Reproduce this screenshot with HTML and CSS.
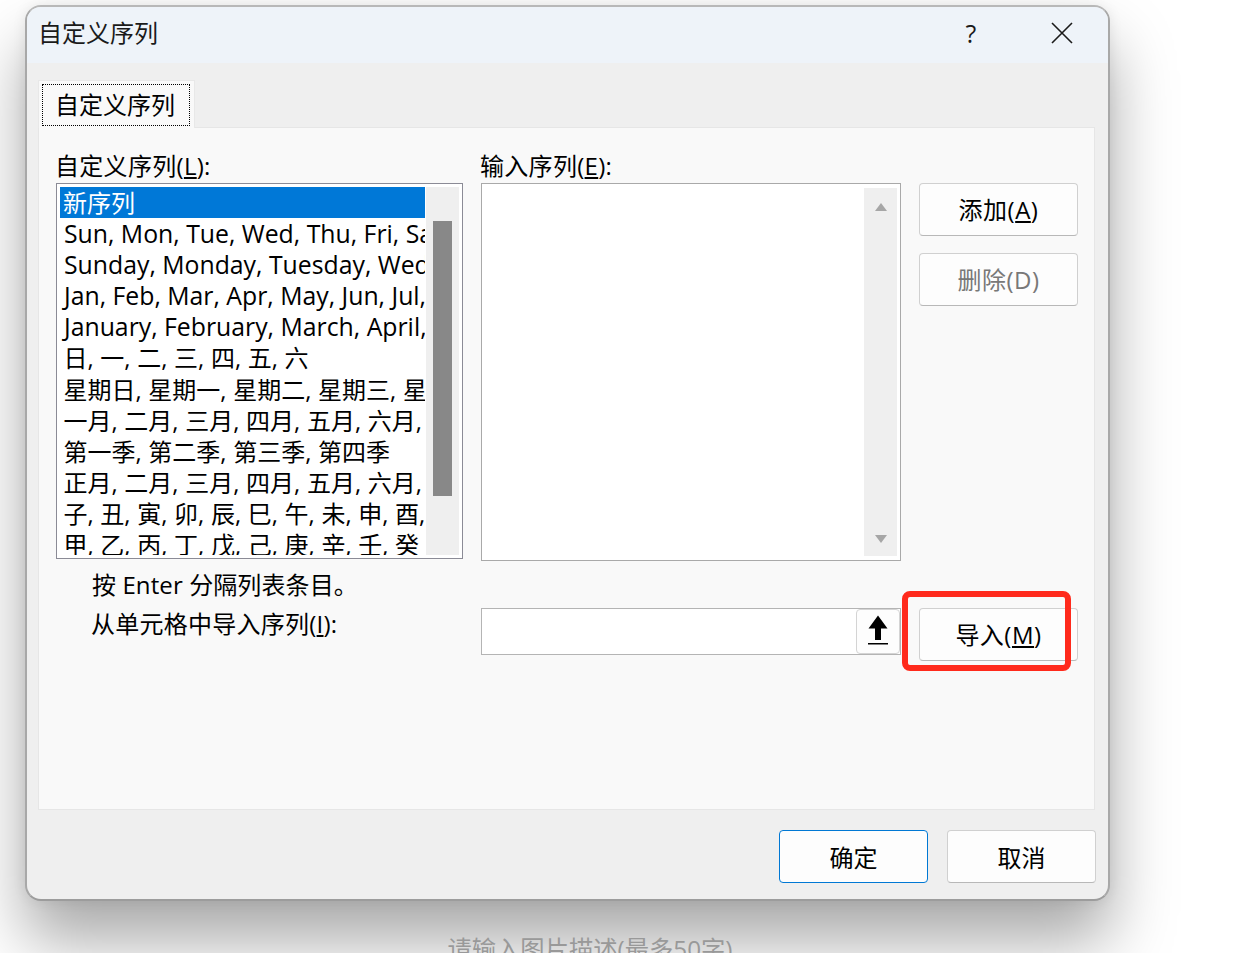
FILE: index.html
```html
<!DOCTYPE html>
<html lang="zh-CN">
<head>
<meta charset="utf-8">
<title>自定义序列</title>
<link rel="stylesheet" href="styles.css">
</head>
<body>
<div class="dialog">
  <header class="titlebar">
    <span class="title">自定义序列</span>
    <span class="help">?</span>
    <svg class="close" width="22" height="22" viewBox="0 0 22 22"><path d="M1 1L21 21M21 1L1 21" stroke="#1a1a1a" stroke-width="1.6" fill="none"/></svg>
  </header>
  <div class="tabs"><div class="tab"><span class="tab-focus">自定义序列</span></div></div>
  <main class="panel">
    <label class="lbl lbl-list">自定义序列(<u>L</u>):</label>
    <label class="lbl lbl-input">输入序列(<u>E</u>):</label>
    <div class="listbox">
      <ul class="items">
        <li class="sel">新序列</li>
        <li class="latin">Sun, Mon, Tue, Wed, Thu, Fri, Sat</li>
        <li class="latin">Sunday, Monday, Tuesday, Wednesday</li>
        <li class="latin">Jan, Feb, Mar, Apr, May, Jun, Jul, Aug</li>
        <li class="latin">January, February, March, April, May</li>
        <li>日, 一, 二, 三, 四, 五, 六</li>
        <li>星期日, 星期一, 星期二, 星期三, 星期四</li>
        <li>一月, 二月, 三月, 四月, 五月, 六月, 七月</li>
        <li>第一季, 第二季, 第三季, 第四季</li>
        <li>正月, 二月, 三月, 四月, 五月, 六月, 七月</li>
        <li>子, 丑, 寅, 卯, 辰, 巳, 午, 未, 申, 酉, 戌</li>
        <li>甲, 乙, 丙, 丁, 戊, 己, 庚, 辛, 壬, 癸</li>
      </ul>
      <div class="list-scroll"><div class="thumb"></div></div>
    </div>
    <div class="textarea">
      <div class="ta-scroll">
        <svg width="14" height="10" viewBox="0 0 14 10"><path d="M7 1L13 9H1Z" fill="#a6a6a6"/></svg>
        <svg width="14" height="10" viewBox="0 0 14 10"><path d="M1 1H13L7 9Z" fill="#a6a6a6"/></svg>
      </div>
    </div>
    <div class="side">
      <button class="btn">添加(<u>A</u>)</button>
      <button class="btn off">删除(D)</button>
    </div>
    <p class="hint">按 Enter 分隔列表条目。</p>
    <label class="lbl-range">从单元格中导入序列(<u>I</u>):</label>
    <div class="range">
      <button class="picker">
        <svg class="arrow" width="24" height="30" viewBox="0 0 24 30"><path d="M12 .5L21.5 13.5H15V25H9V13.5H2.5Z" fill="#000"/><rect x="2" y="28" width="20" height="1.5" fill="#000"/></svg>
      </button>
    </div>
    <div class="import">
      <button class="btn">导入(<u>M</u>)</button>
      <div class="mark"></div>
    </div>
  </main>
  <footer class="actions">
    <button class="btn wide primary">确定</button>
    <button class="btn wide">取消</button>
  </footer>
</div>
<p class="caption">请输入图片描述(最多50字)</p>
</body>
</html>
```
FILE: styles.css
```css
* { box-sizing: border-box; }
html, body { height: 953px; overflow: hidden; }
body {
  margin: 0;
  padding: 5px 0 0 25px;
  background: #fff;
  font-family: "Open Sans", "Noto Sans CJK SC", sans-serif;
  font-size: 24px;
  color: #000;
}
.dialog {
  width: 1085px;
  height: 896px;
  border: 2px solid #a8a8a8;
  border-top-color: #b8b8b8;
  border-bottom-color: #9c9c9c;
  border-radius: 16px;
  background: #efefef;
  box-shadow: 0 40px 64px rgba(0,0,0,.34), 0 0 14px rgba(0,0,0,.08);
  overflow: hidden;
}
.titlebar {
  height: 56px;
  background: #eef3f9;
  display: flex;
  align-items: center;
  padding: 0 36px 0 11px;
  color: #1a1a1a;
}
.title { flex: 1; line-height: 48px; height: 52px; }
.help { width: 20px; text-align: center; margin-right: 70px; line-height: 48px; height: 52px; font-size: 25px; }
.close { display: block; margin: -5px -1px 0 0; }
.tabs { margin: 17px 0 0 11px; height: 47px; display: flex; }
.tab {
  width: 157px;
  height: 48px;
  background: #f9f9f9;
  border: 1px solid #e8e8e8;
  border-bottom: 0;
  padding: 3px 4px 0 3px;
  position: relative;
  z-index: 1;
}
.tab-focus {
  display: block;
  height: 42px;
  border: 1px dotted #000;
  line-height: 40px;
  padding-left: 12px;
}
.panel {
  margin: 0 13px 0 11px;
  height: 683px;
  background: #f9f9f9;
  border: 1px solid #e6e6e6;
  padding: 27px 0 0 17px;
  display: grid;
  grid-template-columns: 407px 420px 159px;
  grid-template-rows: 28px 378px 47px auto;
  column-gap: 18px;
  align-content: start;
  align-items: start;
}
.lbl { line-height: 22px; margin-left: -1px; letter-spacing: .3px; }
.lbl-list { grid-area: 1 / 1; }
.lbl-input { grid-area: 1 / 2; }
.listbox {
  grid-area: 2 / 1;
  height: 376px;
  border: 1px solid #8b8b96;
  background: #fff;
  padding: 3px;
  display: flex;
  overflow: hidden;
}
.items {
  list-style: none;
  margin: 0;
  padding: 0;
  width: 365px;
  flex: none;
  height: 368px;
  overflow: hidden;
}
.items li {
  line-height: 31.1px;
  height: 31.1px;
  white-space: nowrap;
  overflow: hidden;
  padding-left: 3.5px;
  word-spacing: .4px;
}
.items .latin { font-size: 24.8px; word-spacing: 0; padding-left: 4px; }
.items .sel { background: #0078d7; color: #fff; padding-left: 3px; }
.list-scroll {
  margin-left: 1px;
  width: 33px;
  height: 368px;
  background: #efefef;
  padding: 34px 7px 0;
}
.thumb { height: 275px; background: #888; }
.textarea {
  grid-area: 2 / 2;
  height: 378px;
  border: 1px solid #a9a9a9;
  background: #fff;
  padding: 4px 3px;
  display: flex;
  justify-content: flex-end;
}
.ta-scroll {
  width: 33px;
  background: #efefef;
  display: flex;
  flex-direction: column;
  justify-content: space-between;
  align-items: center;
  padding: 14px 0 12px;
}
.ta-scroll svg { display: block; }
.side { grid-area: 2 / 3; display: flex; flex-direction: column; gap: 17px; }
.btn {
  font: inherit;
  letter-spacing: .5px;
  color: #000;
  width: 159px;
  height: 53px;
  background: #fdfdfd;
  border: 1px solid #d0d0d0;
  border-bottom-color: #b8b8b8;
  border-radius: 4px;
  padding: 0 0 2px;
}
.btn.off { color: #787878; }
.wide { width: 149px; letter-spacing: 0; padding: 0; }
.primary { border-color: #0078d4; }
.hint { grid-area: 3 / 1; margin: 0; padding: 8px 0 0 36px; line-height: 32px; letter-spacing: .1px; }
.lbl-range { grid-area: 4 / 1; padding-left: 35px; line-height: 32px; letter-spacing: .25px; }
.range {
  grid-area: 4 / 2;
  height: 47px;
  background: #fff;
  border: 1px solid #b4b4b4;
  display: flex;
  justify-content: flex-end;
}
.picker {
  width: 44px;
  height: 45px;
  padding: 0;
  background: #fdfdfd;
  border: 1px solid #d4d4d4;
  border-radius: 4px;
  display: flex;
  align-items: center;
  justify-content: center;
}
.arrow { display: block; margin-top: -3px; }
.import { grid-area: 4 / 3; position: relative; height: 53px; }
.mark {
  position: absolute;
  left: -17px;
  top: -17px;
  width: 169px;
  height: 80px;
  border: 6px solid #ff2a1c;
  border-radius: 8px;
}
.actions {
  display: flex;
  justify-content: flex-end;
  gap: 19px;
  padding: 20px 12px 0 0;
}
.caption {
  margin: 33px 0 0;
  width: 1130px;
  text-align: center;
  font-size: 24.3px;
  line-height: 30px;
  color: #999;
}
```
